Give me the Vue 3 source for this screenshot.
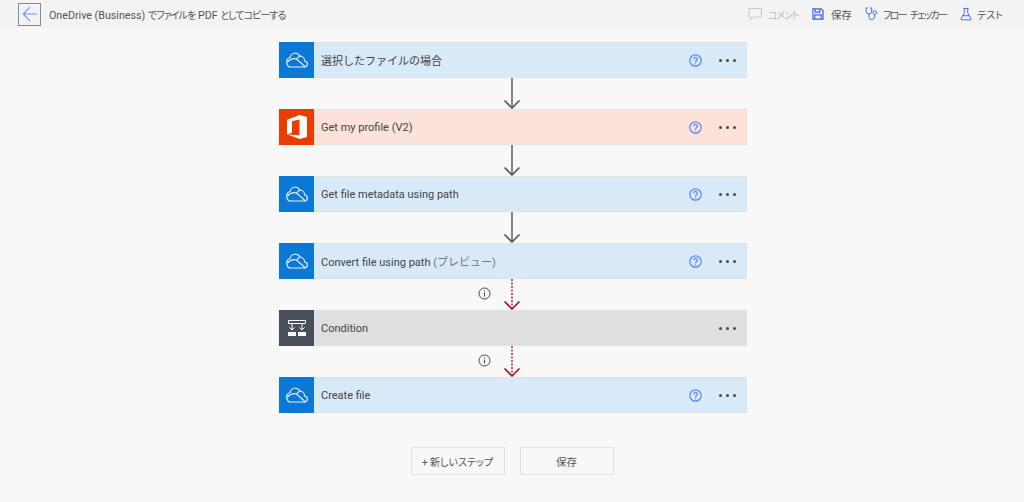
<script setup>
const steps = [
  { title: '選択したファイルの場合', kind: 'drive', help: true },
  { title: 'Get my profile (V2)', kind: 'office', help: true },
  { title: 'Get file metadata using path', kind: 'drive', help: true },
  { title: 'Convert file using path', tag: '(プレビュー)', kind: 'drive', help: true },
  { title: 'Condition', kind: 'cond', help: false, link: 'red' },
  { title: 'Create file', kind: 'drive', help: true, link: 'red' }
]
</script>

<template>
  <div class="page">
    <header class="topbar">
      <div class="left">
        <button class="back">
          <svg width="16" height="16" viewBox="0 0 16 16" fill="none" stroke="#6f8ff5" stroke-width="1.1">
            <path d="M15 8H1.5M8 1.2 1.2 8 8 14.8" />
          </svg>
        </button>
        <span class="flow-name">OneDrive (Business) <span class="jp">でファイルを</span> PDF <span class="jp">としてコピーする</span></span>
      </div>
      <div class="actions">
        <span class="action off">
          <svg width="15" height="14" viewBox="0 0 15 14" fill="none" stroke="#c9c9c9" stroke-width="1">
            <path d="M1 1.5h12.500v8.500H5.500L3 12.500V10H1z" />
          </svg>
          <span class="comment-text">コメント</span>
        </span>
        <span class="action save">
          <svg width="12" height="12" viewBox="0 0 13 13" fill="none" stroke="#3f66e0" stroke-width="1.300">
            <path d="M1 1h9l2 2v9H1zM3.500 1v3.500h5V1M3 12V7.500h7V12" />
          </svg>
          <span class="save-text">保存</span>
        </span>
        <span class="action checker">
          <svg width="14" height="14" viewBox="0 0 15 15" fill="none" stroke="#3f66e0" stroke-width="1">
            <path d="M3 1H1.200v3.500a3 3 0 0 0 6 0V1H5.500M4.200 7.500v3a3 3 0 0 0 6 0V8" />
            <circle cx="10.500" cy="6" r="2" />
          </svg>
          <span class="checker-text">フロー チェッカー</span>
        </span>
        <span class="action test">
          <svg width="12" height="14" viewBox="0 0 14 15" fill="none" stroke="#3f66e0" stroke-width="1.100">
            <path d="M4 1h6M5 1v5L1 13.500q0 .8 1 .8h10q1 0 1-.8L9 6V1M3.500 9.500h7" />
          </svg>
          テスト
        </span>
      </div>
    </header>

    <main class="canvas">
      <template v-for="(s, i) in steps" :key="i">
        <div v-if="i > 0" class="link" :class="{ red: s.link === 'red' }">
          <svg v-if="s.link === 'red'" class="info" width="13" height="13" viewBox="0 0 13 13" fill="none" stroke="#444" stroke-width="1">
            <circle cx="6.500" cy="6.500" r="5.500" />
            <path d="M6.500 5.500v4M6.500 3.300v1.100" />
          </svg>
          <svg width="18" height="31" viewBox="0 0 18 31" fill="none" :stroke="s.link === 'red' ? '#b0101e' : '#555'" stroke-width="1.400">
            <path d="M9 0v30" :stroke-dasharray="s.link === 'red' ? '2 1.500' : ''" />
            <path d="M1.500 22.500 9 30l7.500-7.500" stroke-width="1.600" />
          </svg>
        </div>
        <div class="card" :class="s.kind">
          <div class="badge">
            <svg v-if="s.kind === 'drive'" width="22" height="16" viewBox="0 0 22 16" fill="none" stroke="#e3effa" stroke-width="1.200">
              <path d="M4.500 15h13.500a3 3 0 0 0 .6-6 5 5 0 0 0-4.600-5 6.500 6.500 0 0 0-4.500-3 6 6 0 0 0-5.500 4.500A4.500 4.500 0 0 0 1 11.500 3.500 3.500 0 0 0 4.500 15z" />
              <path d="M1.500 10q4-4.500 9-3l8.500 7.500M10.500 7q2-2.500 4-3" />
            </svg>
            <svg v-else-if="s.kind === 'office'" width="20" height="24" viewBox="0 0 20 24">
              <path fill="#fff" d="M0 4.700 12.500 0 20 2v20l-7.500 2L0 19.300zM12.500 20.500V4.500L5 6.200v11.500L0 19.300z" fill-rule="evenodd" />
            </svg>
            <svg v-else width="20" height="18" viewBox="0 0 20 18" fill="none" stroke="#fff" stroke-width="1">
              <path d="M1.500 1.500h17v3h-17zM5 4.500V11M15 4.500V11M2.500 8.500 5 11l2.500-2.500M12.500 8.500 15 11l2.500-2.500" />
              <path fill="#fff" stroke="none" d="M1 13h8v4H1zM11 13h8v4h-8z" />
            </svg>
          </div>
          <div class="title">
            {{ s.title }}
            <span v-if="s.tag" class="tag">{{ s.tag }}</span>
          </div>
          <svg v-if="s.help" class="help" width="13" height="13" viewBox="0 0 13 13" fill="none" stroke="#5a85f6" stroke-width="1.200">
            <circle cx="6.500" cy="6.500" r="5.700" />
            <path d="M4.700 5.200a1.800 1.800 0 1 1 2.700 1.600c-.6.400-.9.700-.9 1.400M6.500 9.300v1" />
          </svg>
          <div class="more"><i></i><i></i><i></i></div>
        </div>
      </template>

      <div class="buttons">
        <button class="btn step">+ 新しいステップ</button>
        <button class="btn">保存</button>
      </div>
    </main>
  </div>
</template>

<style scoped>
.page {
  width: 1024px;
  height: 502px;
  overflow: hidden;
  background: #f8f8f8;
  font-family: Roboto, "Noto Sans CJK JP", sans-serif;
  color: #444;
}
.topbar {
  height: 28px;
  background: #f3f3f3;
  display: flex;
  align-items: center;
  justify-content: space-between;
  padding: 0 21px 0 18px;
  font-feature-settings: "palt";
}
.left {
  display: flex;
  align-items: center;
  gap: 8px;
}
.back {
  width: 23px;
  height: 23px;
  padding: 0;
  border: 1px solid #8a8a8a;
  background: transparent;
  display: flex;
  align-items: center;
  justify-content: center;
}
.flow-name {
  font-size: 10.7px;
  color: #555;
}
.jp {
  font-size: 10px;
  letter-spacing: -0.95px;
}
.actions {
  display: flex;
  align-items: center;
  gap: 13px;
  font-size: 10px;
  color: #555;
}
.action {
  display: flex;
  align-items: center;
  gap: 5px;
}
.action.off {
  color: #bbb;
}
.action.save {
  gap: 7px;
}
.action.checker {
  gap: 4px;
}
.action.test {
  margin-left: 1px;
}
.comment-text {
  letter-spacing: -0.9px;
}
.save-text {
  font-size: 10.500px;
}
.checker-text {
  letter-spacing: -1.600px;
  word-spacing: 3px;
}
.canvas {
  width: 468px;
  margin: 14px 0 0 279px;
  display: flex;
  flex-direction: column;
}
.card {
  height: 36px;
  box-sizing: border-box;
  border: 1px solid #e1e1e1;
  border-left: 0;
  display: flex;
  align-items: center;
  background: #d8e9f8;
}
.card.office {
  background: #fde2da;
}
.card.cond {
  background: #dedfe0;
}
.badge {
  width: 35px;
  height: 36px;
  flex: none;
  display: flex;
  align-items: center;
  justify-content: center;
  background: #0a78d4;
}
.office .badge {
  background: #eb3c00;
}
.cond .badge {
  background: #484f58;
}
.title {
  flex: 1;
  padding-left: 7px;
  font-size: 11px;
  color: #444;
}
.tag {
  color: #777;
}
.help {
  margin-right: 17px;
}
.more {
  width: 17px;
  margin-right: 10px;
  display: flex;
  justify-content: space-between;
}
.more i {
  width: 3px;
  height: 3px;
  border-radius: 50%;
  background: #4a4a4a;
}
.link {
  position: relative;
  height: 31px;
  padding-right: 2px;
  display: flex;
  justify-content: center;
}
.info {
  position: absolute;
  left: 199px;
  top: 8px;
}
.buttons {
  margin-top: 34px;
  padding-right: 2px;
  display: flex;
  justify-content: center;
  gap: 15px;
}
.btn {
  width: 94px;
  height: 28px;
  padding: 0;
  border: 1px solid #e2e2e2;
  background: #f8f8f8;
  font: inherit;
  font-size: 10.5px;
  white-space: nowrap;
  color: #555;
}
.btn.step {
  font-size: 10px;
  font-feature-settings: "palt";
}
</style>
